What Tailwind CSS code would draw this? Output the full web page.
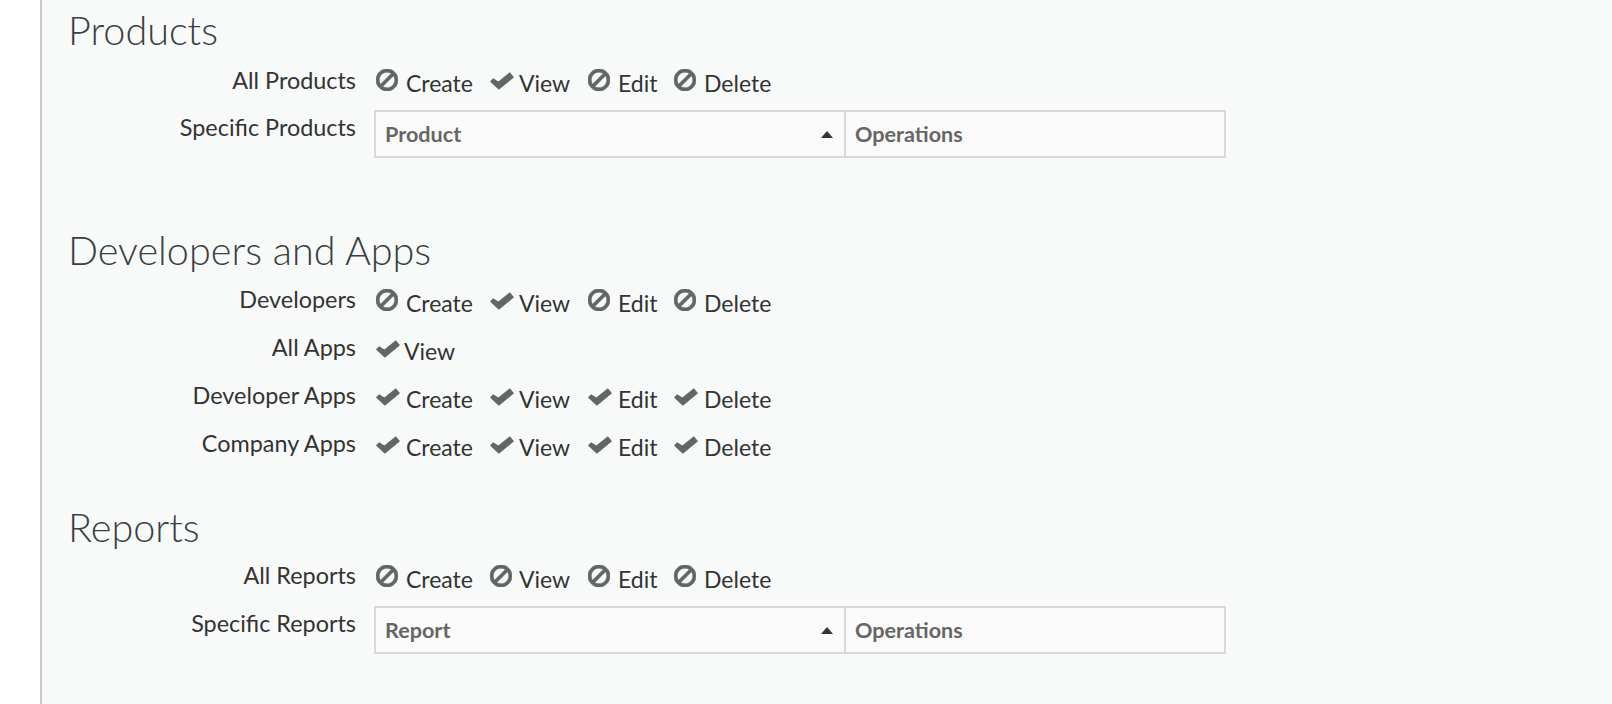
<!DOCTYPE html>
<html>
<head>
<meta charset="utf-8">
<script src="https://cdn.jsdelivr.net/npm/@tailwindcss/browser@4"></script>
</head>
<body class="bg-white font-['Lato',sans-serif] text-[#333] overflow-hidden">
<svg class="hidden">
  <symbol id="ban" viewBox="128 128 1536 1536"><path fill="currentColor" stroke="currentColor" stroke-width="45" d="M1440 893q0-161-87-295l-754 753q137 89 297 89 111 0 211.5-43.5t173.5-116.5 116-174.5 43-212.5zm-999 299l755-754q-135-91-300-91-148 0-273 73t-198 199-73 274q0 162 89 299zm1223-299q0 157-61 300t-163.5 246-245 164-298.5 61-298.5-61-245-164-163.5-246-61-300 61-299.5 163.5-245.5 245-164 298.5-61 298.5 61 245 164 163.5 245.5 61 299.5z"/></symbol>
  <symbol id="check" viewBox="0 0 23 17"><path fill="currentColor" d="M0 9 3 5.8 8 9 19 0 23 5 8.5 17z"/></symbol>
</svg>
<div class="ml-10 h-[704px] border-l-2 border-[#c8c9c9] bg-[#f8f9f9] pl-[26px] overflow-hidden">

  <!-- products -->
  <section class="h-[220px]">
    <h2 class="h-[60px] pt-[5px] text-[39.6px] leading-[50px] font-light text-[#3a3f41]">Products</h2>
    <div class="flex h-[50px]">
      <div class="w-[288px] pt-[6px] text-right text-[23.4px] leading-[28px]">All Products</div>
      <div class="flex pl-[20px] pt-[9px] text-[23px] leading-[28px]">
        <span class="flex w-[114px] items-start"><svg class="mr-[8px] h-[22px] w-[22px] text-[#636566] blur-[0.4px]"><use href="#ban"/></svg>Create</span>
        <span class="flex w-[98px] items-start"><svg class="mr-[5px] mt-[3px] h-[18px] w-[24px] text-[#636566] blur-[0.4px]"><use href="#check"/></svg>View</span>
        <span class="flex w-[86px] items-start"><svg class="mr-[8px] h-[22px] w-[22px] text-[#636566] blur-[0.4px]"><use href="#ban"/></svg>Edit</span>
        <span class="flex items-start"><svg class="mr-[8px] h-[22px] w-[22px] text-[#636566] blur-[0.4px]"><use href="#ban"/></svg>Delete</span>
      </div>
    </div>
    <div class="flex">
      <div class="w-[288px] pt-[3px] text-right text-[23.4px] leading-[28px]">Specific Products</div>
      <div class="ml-[18px] flex h-[48px] w-[852px] border-2 border-[#d8d8d8] bg-[#fafafa] text-[21.6px] font-bold text-[#666]">
        <div class="flex w-[470px] items-center justify-between border-r-2 border-[#d8d8d8] pl-[9px] pr-[11px]">Product<span class="h-0 w-0 border-x-[6px] border-b-[7px] border-x-transparent border-b-[#2f3538]"></span></div>
        <div class="flex items-center pl-[9px]">Operations</div>
      </div>
    </div>
  </section>

  <!-- developers and apps -->
  <section class="h-[276px]">
    <h2 class="h-[60px] pt-[5px] text-[39.6px] leading-[50px] font-light text-[#3a3f41]">Developers and Apps</h2>
    <div class="flex h-[48px]">
      <div class="w-[288px] pt-[5px] text-right text-[23.4px] leading-[28px]">Developers</div>
      <div class="flex pl-[20px] pt-[9px] text-[23px] leading-[28px]">
        <span class="flex w-[114px] items-start"><svg class="mr-[8px] h-[22px] w-[22px] text-[#636566] blur-[0.4px]"><use href="#ban"/></svg>Create</span>
        <span class="flex w-[98px] items-start"><svg class="mr-[5px] mt-[3px] h-[18px] w-[24px] text-[#636566] blur-[0.4px]"><use href="#check"/></svg>View</span>
        <span class="flex w-[86px] items-start"><svg class="mr-[8px] h-[22px] w-[22px] text-[#636566] blur-[0.4px]"><use href="#ban"/></svg>Edit</span>
        <span class="flex items-start"><svg class="mr-[8px] h-[22px] w-[22px] text-[#636566] blur-[0.4px]"><use href="#ban"/></svg>Delete</span>
      </div>
    </div>
    <div class="flex h-[48px]">
      <div class="w-[288px] pt-[5px] text-right text-[23.4px] leading-[28px]">All Apps</div>
      <div class="flex pl-[20px] pt-[9px] text-[23px] leading-[28px]">
        <span class="flex items-start"><svg class="mr-[4px] mt-[3px] h-[18px] w-[24px] text-[#636566] blur-[0.4px]"><use href="#check"/></svg>View</span>
      </div>
    </div>
    <div class="flex h-[48px]">
      <div class="w-[288px] pt-[5px] text-right text-[23.4px] leading-[28px]">Developer Apps</div>
      <div class="flex pl-[20px] pt-[9px] text-[23px] leading-[28px]">
        <span class="flex w-[114px] items-start"><svg class="mr-[6px] mt-[3px] h-[18px] w-[24px] text-[#636566] blur-[0.4px]"><use href="#check"/></svg>Create</span>
        <span class="flex w-[98px] items-start"><svg class="mr-[5px] mt-[3px] h-[18px] w-[24px] text-[#636566] blur-[0.4px]"><use href="#check"/></svg>View</span>
        <span class="flex w-[86px] items-start"><svg class="mr-[6px] mt-[3px] h-[18px] w-[24px] text-[#636566] blur-[0.4px]"><use href="#check"/></svg>Edit</span>
        <span class="flex items-start"><svg class="mr-[6px] mt-[3px] h-[18px] w-[24px] text-[#636566] blur-[0.4px]"><use href="#check"/></svg>Delete</span>
      </div>
    </div>
    <div class="flex h-[48px]">
      <div class="w-[288px] pt-[5px] text-right text-[23.4px] leading-[28px]">Company Apps</div>
      <div class="flex pl-[20px] pt-[9px] text-[23px] leading-[28px]">
        <span class="flex w-[114px] items-start"><svg class="mr-[6px] mt-[3px] h-[18px] w-[24px] text-[#636566] blur-[0.4px]"><use href="#check"/></svg>Create</span>
        <span class="flex w-[98px] items-start"><svg class="mr-[5px] mt-[3px] h-[18px] w-[24px] text-[#636566] blur-[0.4px]"><use href="#check"/></svg>View</span>
        <span class="flex w-[86px] items-start"><svg class="mr-[6px] mt-[3px] h-[18px] w-[24px] text-[#636566] blur-[0.4px]"><use href="#check"/></svg>Edit</span>
        <span class="flex items-start"><svg class="mr-[6px] mt-[3px] h-[18px] w-[24px] text-[#636566] blur-[0.4px]"><use href="#check"/></svg>Delete</span>
      </div>
    </div>
  </section>

  <!-- reports -->
  <section>
    <h2 class="h-[60px] pt-[6px] text-[39.6px] leading-[50px] font-light text-[#3a3f41]">Reports</h2>
    <div class="flex h-[50px]">
      <div class="w-[288px] pt-[5px] text-right text-[23.4px] leading-[28px]">All Reports</div>
      <div class="flex pl-[20px] pt-[9px] text-[23px] leading-[28px]">
        <span class="flex w-[114px] items-start"><svg class="mr-[8px] h-[22px] w-[22px] text-[#636566] blur-[0.4px]"><use href="#ban"/></svg>Create</span>
        <span class="flex w-[98px] items-start"><svg class="mr-[7px] h-[22px] w-[22px] text-[#636566] blur-[0.4px]"><use href="#ban"/></svg>View</span>
        <span class="flex w-[86px] items-start"><svg class="mr-[8px] h-[22px] w-[22px] text-[#636566] blur-[0.4px]"><use href="#ban"/></svg>Edit</span>
        <span class="flex items-start"><svg class="mr-[8px] h-[22px] w-[22px] text-[#636566] blur-[0.4px]"><use href="#ban"/></svg>Delete</span>
      </div>
    </div>
    <div class="flex">
      <div class="w-[288px] pt-[3px] text-right text-[23.4px] leading-[28px]">Specific Reports</div>
      <div class="ml-[18px] flex h-[48px] w-[852px] border-2 border-[#d8d8d8] bg-[#fafafa] text-[21.6px] font-bold text-[#666]">
        <div class="flex w-[470px] items-center justify-between border-r-2 border-[#d8d8d8] pl-[9px] pr-[11px]">Report<span class="h-0 w-0 border-x-[6px] border-b-[7px] border-x-transparent border-b-[#2f3538]"></span></div>
        <div class="flex items-center pl-[9px]">Operations</div>
      </div>
    </div>
  </section>
</div>
</body>
</html>
